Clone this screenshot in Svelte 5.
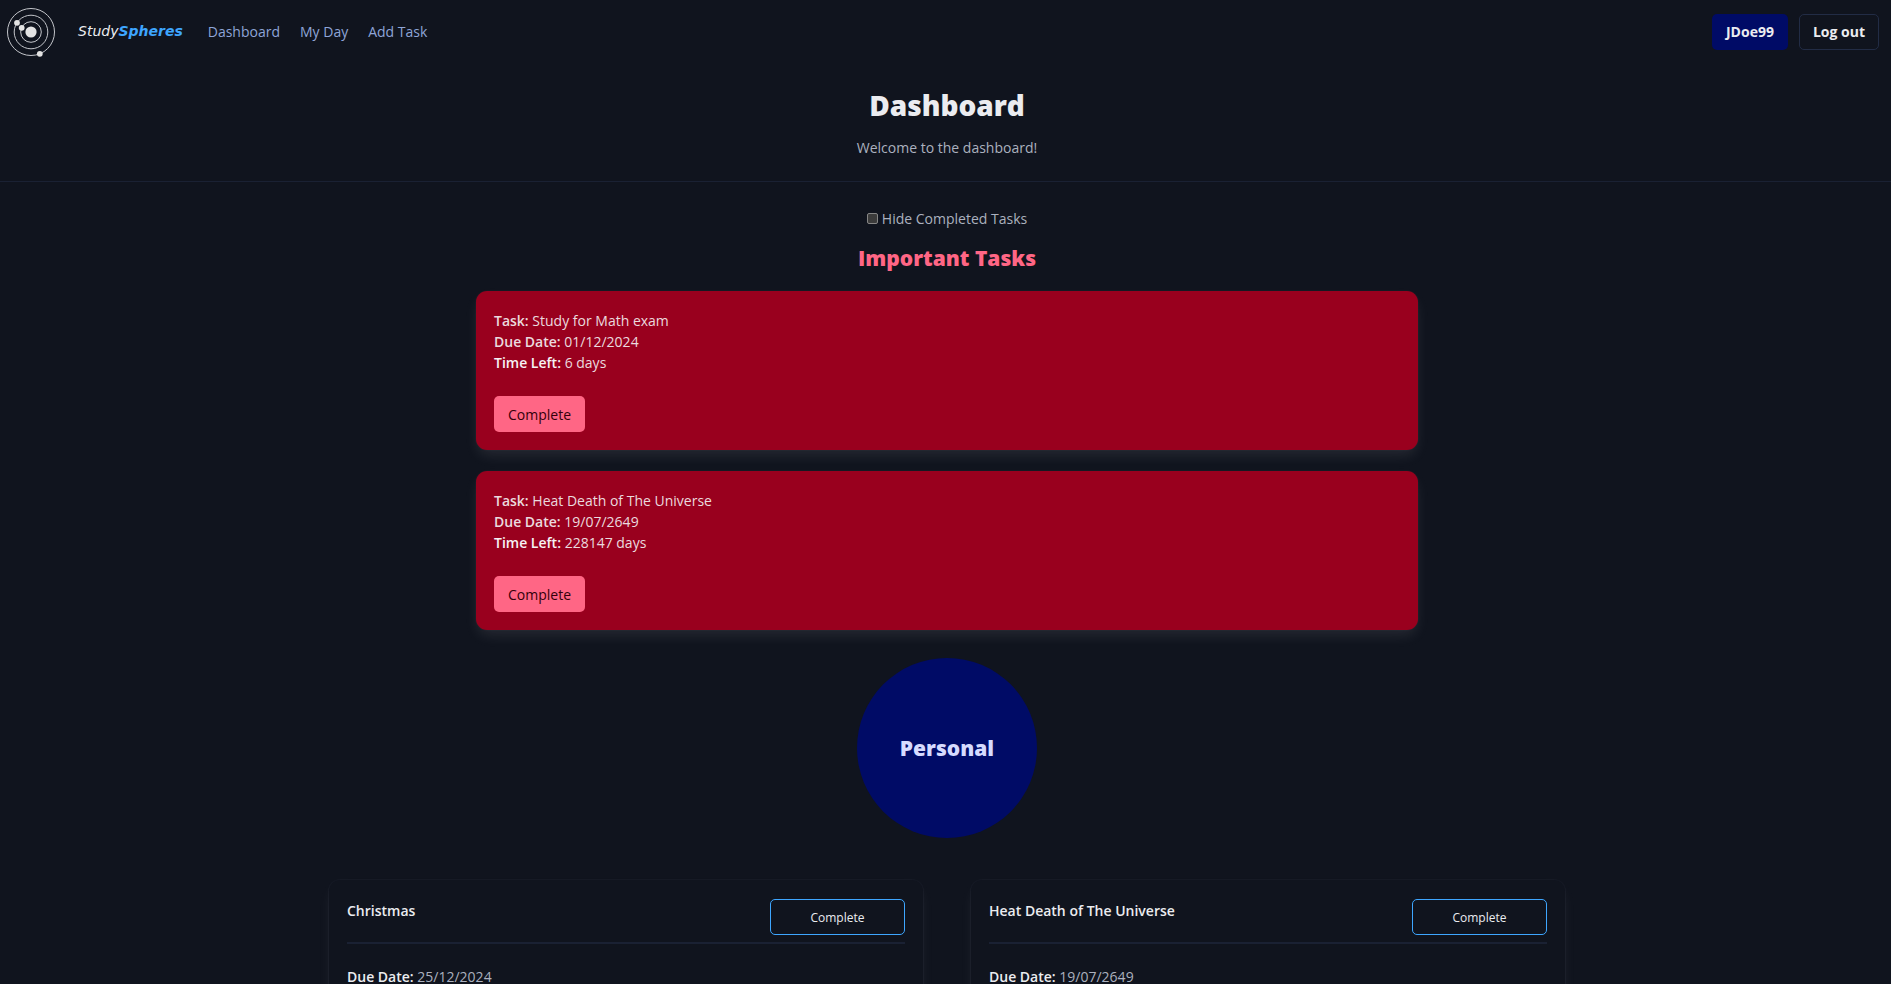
<script>
  let hideCompleted = $state(false);

  const links = ['Dashboard', 'My Day', 'Add Task'];
  const important = [
    { name: 'Study for Math exam', due: '01/12/2024', left: '6 days' },
    { name: 'Heat Death of The Universe', due: '19/07/2649', left: '228147 days' }
  ];
  const personal = [
    { name: 'Christmas', due: '25/12/2024' },
    { name: 'Heat Death of The Universe', due: '19/07/2649' }
  ];
</script>

<nav class="navbar" aria-label="Main">
  <a class="logo" href="#home" aria-label="StudySpheres">
    <svg width="50" height="52" viewBox="0 0 50 52" aria-hidden="true">
      <g fill="none" stroke="#c3c5ca" stroke-width="1">
        <circle cx="25" cy="26" r="23.5" />
        <circle cx="25" cy="26" r="16.8" />
        <circle cx="25" cy="26" r="10.3" />
      </g>
      <g fill="#e3e3e3">
        <circle cx="25" cy="26" r="5.6" />
        <circle cx="11" cy="16.8" r="2.9" />
        <circle cx="15.7" cy="21.8" r="2.9" />
        <circle cx="33.8" cy="47.8" r="2.9" />
      </g>
    </svg>
  </a>
  <a class="brand" href="#home">Study<strong>Spheres</strong></a>
  {#each links as link}
    <a class="link" href="#{link}">{link}</a>
  {/each}
  <div class="account">
    <button class="btn user">JDoe99</button>
    <button class="btn logout">Log out</button>
  </div>
</nav>

<header class="hero">
  <h1>Dashboard</h1>
  <p>Welcome to the dashboard!</p>
</header>

<main>
  <label class="filter">
    <input type="checkbox" bind:checked={hideCompleted} />
    Hide Completed Tasks
  </label>

  <h2 class="important-title">Important Tasks</h2>
  <section class="important">
    {#each important as task}
      <article class="alert">
        <p><strong>Task:</strong> {task.name}</p>
        <p><strong>Due Date:</strong> {task.due}</p>
        <p><strong class="bright">Time Left:</strong> {task.left}</p>
        <button class="btn danger">Complete</button>
      </article>
    {/each}
  </section>

  <div class="sphere"><h2>Personal</h2></div>

  <section class="grid">
    {#each personal as task}
      <article class="card">
        <div class="card-head">
          <h3>{task.name}</h3>
          <button class="btn outline">Complete</button>
        </div>
        <hr />
        <p><strong>Due Date:</strong> {task.due}</p>
      </article>
    {/each}
  </section>
</main>

<style>
  :global(html) {
    background: #10141e;
    scrollbar-width: none;
  }
  :global(body) {
    margin: 0;
    color: #abb1bf;
    font: 14px/21px 'Open Sans', 'Noto Sans', sans-serif;
  }
  * {
    box-sizing: border-box;
  }
  h1, h2, h3, p {
    margin: 0;
  }
  a {
    text-decoration: none;
  }

  .navbar {
    display: flex;
    align-items: center;
    height: 63px;
    padding: 0 12px 0 6px;
  }
  .logo {
    display: flex;
  }
  .brand {
    margin-left: 22px;
    margin-right: 15px;
    color: #ebecf0;
    font-family: 'DejaVu Sans', sans-serif;
    font-style: italic;
  }
  .brand strong {
    color: #3ea6ff;
  }
  .link {
    padding: 0 10px;
    color: #8ea5d8;
  }
  .account {
    display: flex;
    gap: 11px;
    margin-left: auto;
  }
  .btn {
    height: 36px;
    border: 1px solid transparent;
    border-radius: 5px;
    background: none;
    color: #ebecf0;
    font: inherit;
    cursor: pointer;
  }
  .user,
  .logout {
    padding: 0 13px;
    font-weight: 700;
  }
  .user {
    background: #000b66;
  }
  .logout {
    border-color: #222c45;
  }

  .hero {
    display: flex;
    flex-direction: column;
    align-items: center;
    gap: 14px;
    padding: 24px 0 23px 3px;
    border-bottom: 1px solid #1a2133;
  }
  h1 {
    color: #ebecf0;
    font-size: 28px;
    line-height: 36px;
    font-weight: 800;
  }

  main {
    display: flex;
    flex-direction: column;
    align-items: center;
    padding: 26px 0 24px 3px;
  }
  .filter {
    display: flex;
    align-items: center;
    gap: 4px;
  }
  .filter input {
    appearance: none;
    width: 11px;
    height: 11px;
    margin: 0;
    border: 1px solid #858585;
    border-radius: 2px;
    background: #3b3b3b;
  }
  .filter input:checked {
    background: #3ea6ff;
  }
  h2 {
    font-size: 21px;
    line-height: 28px;
    font-weight: 800;
  }
  .important-title {
    margin: 15px 0 19px;
    color: #ff6685;
  }
  .important {
    display: grid;
    gap: 21px;
    width: 100%;
    max-width: 942px;
  }
  .alert {
    padding: 19px 18px 18px;
    border-radius: 11px;
    background: #99001e;
    box-shadow: 0 7px 14px -2px rgb(235 236 240 / 10%), 0 0 0 1px rgb(235 236 240 / 2%);
    color: #ebdade;
  }
  .alert .bright {
    color: #f6f2f4;
  }
  .danger {
    display: block;
    margin-top: 23px;
    padding: 0 13px;
    background: #ff6685;
    color: #33000a;
    font-weight: 500;
  }

  .sphere {
    display: grid;
    place-items: center;
    width: 180px;
    aspect-ratio: 1;
    margin: 28px 0 42px;
    border-radius: 50%;
    background: #000b66;
    color: #d6dbff;
  }

  .grid {
    display: grid;
    grid-template-columns: 1fr 1fr;
    gap: 48px;
    width: 100%;
    max-width: 1236px;
  }
  .card {
    padding: 19px 18px;
    border-radius: 11px;
    background: #10141e;
    box-shadow: 0 7px 14px -2px rgb(235 236 240 / 7%), 0 0 0 1px rgb(235 236 240 / 3%);
  }
  .card-head {
    display: flex;
    justify-content: space-between;
  }
  h3 {
    font-size: 14px;
    line-height: 24px;
    font-weight: 600;
    color: #ebecf0;
  }
  .card strong {
    color: #ebecf0;
  }
  p strong {
    font-weight: 600;
  }
  .outline {
    width: 135px;
    border-color: #3ea6ff;
    font-size: 12px;
  }
  hr {
    width: 100%;
    height: 2px;
    margin: 7px 0 22px;
    border: 0;
    background: #1a2133;
  }
</style>
